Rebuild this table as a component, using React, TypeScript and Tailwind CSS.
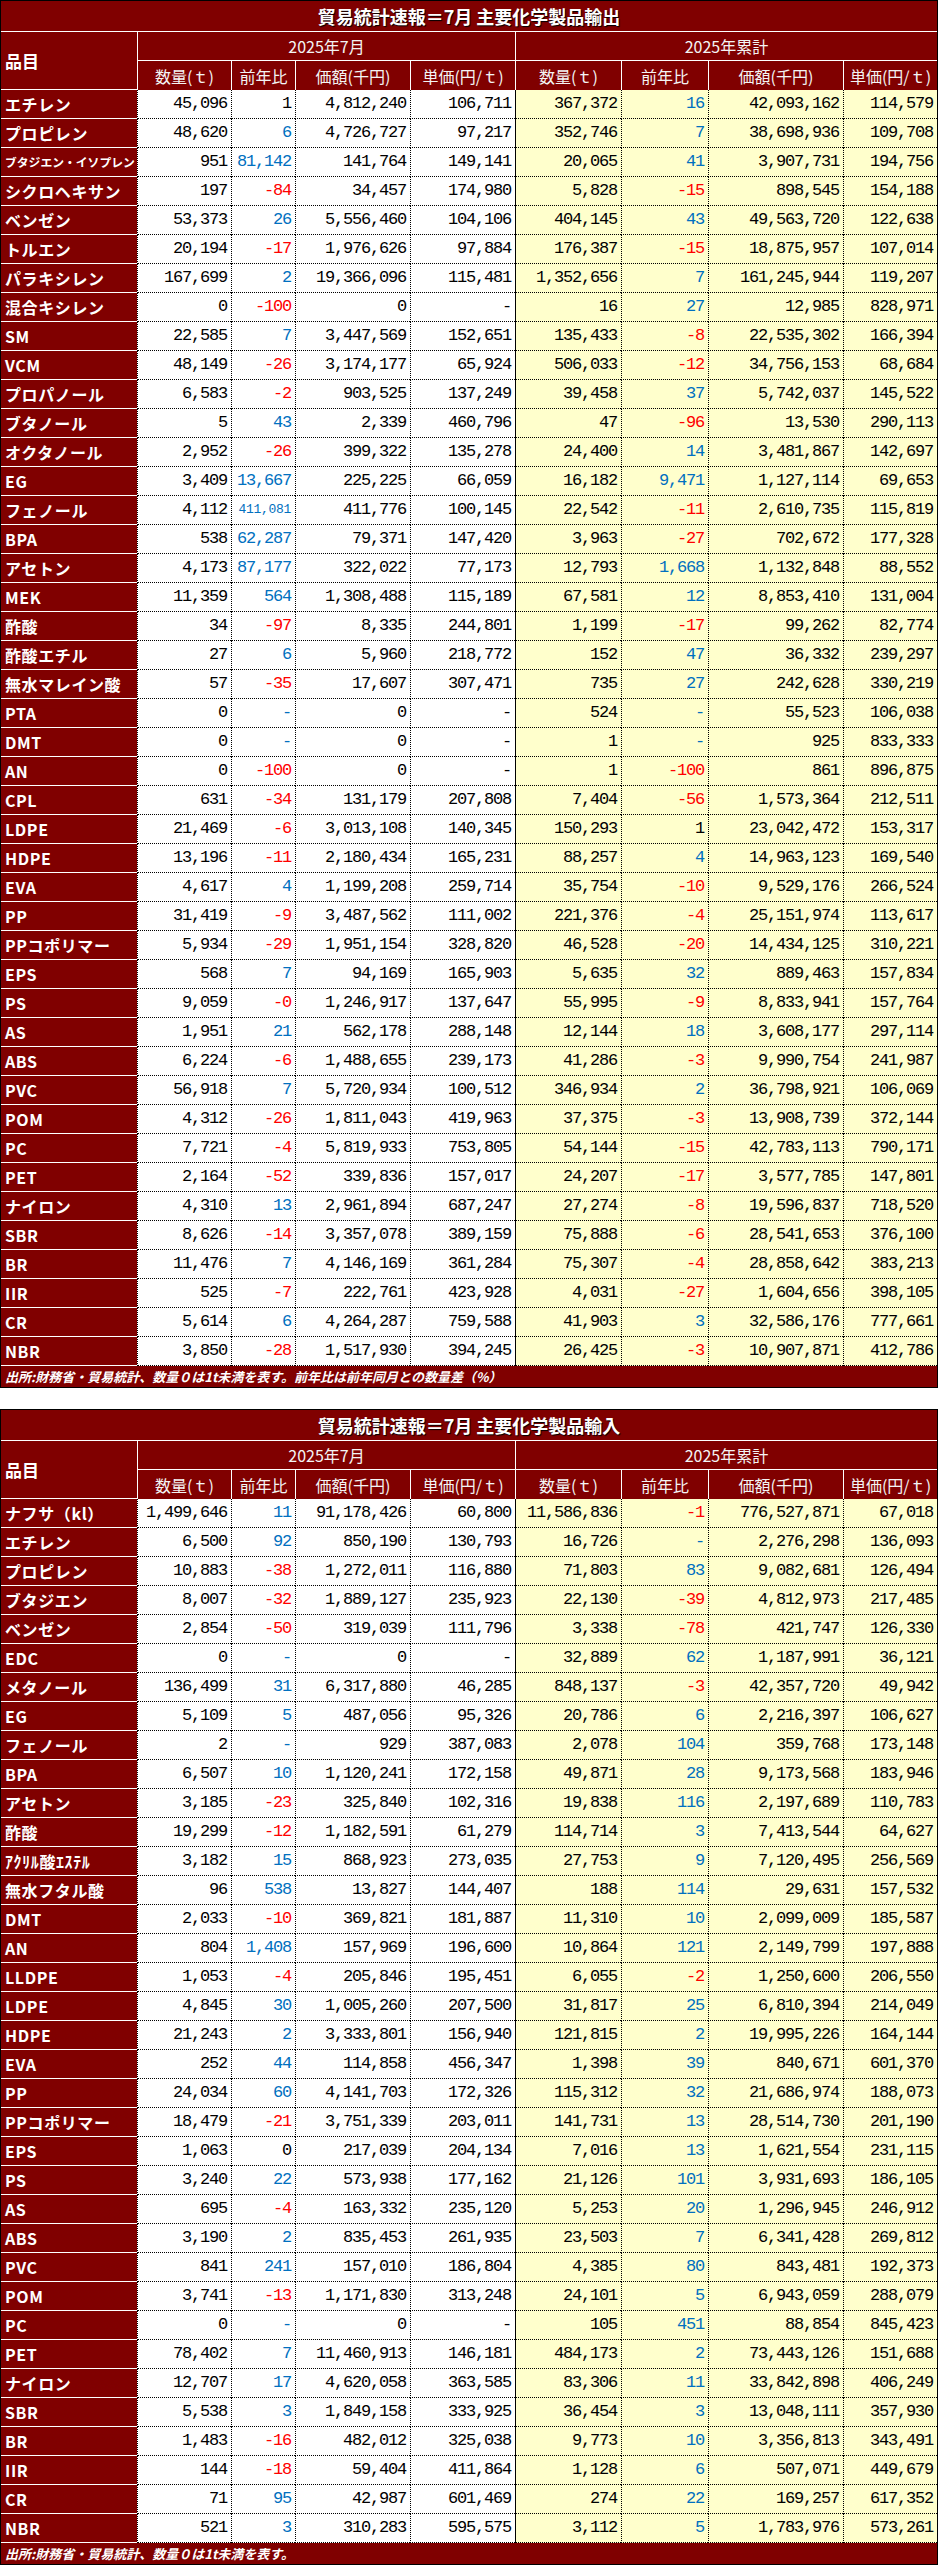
const exportRows = [
  "エチレン|45,096|1|4,812,240|106,711|367,372|16|42,093,162|114,579",
  "プロピレン|48,620|6|4,726,727|97,217|352,746|7|38,698,936|109,708",
  "ブタジエン・イソプレン|951|81,142|141,764|149,141|20,065|41|3,907,731|194,756",
  "シクロヘキサン|197|-84|34,457|174,980|5,828|-15|898,545|154,188",
  "ベンゼン|53,373|26|5,556,460|104,106|404,145|43|49,563,720|122,638",
  "トルエン|20,194|-17|1,976,626|97,884|176,387|-15|18,875,957|107,014",
  "パラキシレン|167,699|2|19,366,096|115,481|1,352,656|7|161,245,944|119,207",
  "混合キシレン|0|-100|0|-|16|27|12,985|828,971",
  "SM|22,585|7|3,447,569|152,651|135,433|-8|22,535,302|166,394",
  "VCM|48,149|-26|3,174,177|65,924|506,033|-12|34,756,153|68,684",
  "プロパノール|6,583|-2|903,525|137,249|39,458|37|5,742,037|145,522",
  "ブタノール|5|43|2,339|460,796|47|-96|13,530|290,113",
  "オクタノール|2,952|-26|399,322|135,278|24,400|14|3,481,867|142,697",
  "EG|3,409|13,667|225,225|66,059|16,182|9,471|1,127,114|69,653",
  "フェノール|4,112|411,081|411,776|100,145|22,542|-11|2,610,735|115,819",
  "BPA|538|62,287|79,371|147,420|3,963|-27|702,672|177,328",
  "アセトン|4,173|87,177|322,022|77,173|12,793|1,668|1,132,848|88,552",
  "MEK|11,359|564|1,308,488|115,189|67,581|12|8,853,410|131,004",
  "酢酸|34|-97|8,335|244,801|1,199|-17|99,262|82,774",
  "酢酸エチル|27|6|5,960|218,772|152|47|36,332|239,297",
  "無水マレイン酸|57|-35|17,607|307,471|735|27|242,628|330,219",
  "PTA|0|-|0|-|524|-|55,523|106,038",
  "DMT|0|-|0|-|1|-|925|833,333",
  "AN|0|-100|0|-|1|-100|861|896,875",
  "CPL|631|-34|131,179|207,808|7,404|-56|1,573,364|212,511",
  "LDPE|21,469|-6|3,013,108|140,345|150,293|1|23,042,472|153,317",
  "HDPE|13,196|-11|2,180,434|165,231|88,257|4|14,963,123|169,540",
  "EVA|4,617|4|1,199,208|259,714|35,754|-10|9,529,176|266,524",
  "PP|31,419|-9|3,487,562|111,002|221,376|-4|25,151,974|113,617",
  "PPコポリマー|5,934|-29|1,951,154|328,820|46,528|-20|14,434,125|310,221",
  "EPS|568|7|94,169|165,903|5,635|32|889,463|157,834",
  "PS|9,059|-0|1,246,917|137,647|55,995|-9|8,833,941|157,764",
  "AS|1,951|21|562,178|288,148|12,144|18|3,608,177|297,114",
  "ABS|6,224|-6|1,488,655|239,173|41,286|-3|9,990,754|241,987",
  "PVC|56,918|7|5,720,934|100,512|346,934|2|36,798,921|106,069",
  "POM|4,312|-26|1,811,043|419,963|37,375|-3|13,908,739|372,144",
  "PC|7,721|-4|5,819,933|753,805|54,144|-15|42,783,113|790,171",
  "PET|2,164|-52|339,836|157,017|24,207|-17|3,577,785|147,801",
  "ナイロン|4,310|13|2,961,894|687,247|27,274|-8|19,596,837|718,520",
  "SBR|8,626|-14|3,357,078|389,159|75,888|-6|28,541,653|376,100",
  "BR|11,476|7|4,146,169|361,284|75,307|-4|28,858,642|383,213",
  "IIR|525|-7|222,761|423,928|4,031|-27|1,604,656|398,105",
  "CR|5,614|6|4,264,287|759,588|41,903|3|32,586,176|777,661",
  "NBR|3,850|-28|1,517,930|394,245|26,425|-3|10,907,871|412,786",
];

const importRows = [
  "ナフサ（kl）|1,499,646|11|91,178,426|60,800|11,586,836|-1|776,527,871|67,018",
  "エチレン|6,500|92|850,190|130,793|16,726|-|2,276,298|136,093",
  "プロピレン|10,883|-38|1,272,011|116,880|71,803|83|9,082,681|126,494",
  "ブタジエン|8,007|-32|1,889,127|235,923|22,130|-39|4,812,973|217,485",
  "ベンゼン|2,854|-50|319,039|111,796|3,338|-78|421,747|126,330",
  "EDC|0|-|0|-|32,889|62|1,187,991|36,121",
  "メタノール|136,499|31|6,317,880|46,285|848,137|-3|42,357,720|49,942",
  "EG|5,109|5|487,056|95,326|20,786|6|2,216,397|106,627",
  "フェノール|2|-|929|387,083|2,078|104|359,768|173,148",
  "BPA|6,507|10|1,120,241|172,158|49,871|28|9,173,568|183,946",
  "アセトン|3,185|-23|325,840|102,316|19,838|116|2,197,689|110,783",
  "酢酸|19,299|-12|1,182,591|61,279|114,714|3|7,413,544|64,627",
  "ｱｸﾘﾙ酸ｴｽﾃﾙ|3,182|15|868,923|273,035|27,753|9|7,120,495|256,569",
  "無水フタル酸|96|538|13,827|144,407|188|114|29,631|157,532",
  "DMT|2,033|-10|369,821|181,887|11,310|10|2,099,009|185,587",
  "AN|804|1,408|157,969|196,600|10,864|121|2,149,799|197,888",
  "LLDPE|1,053|-4|205,846|195,451|6,055|-2|1,250,600|206,550",
  "LDPE|4,845|30|1,005,260|207,500|31,817|25|6,810,394|214,049",
  "HDPE|21,243|2|3,333,801|156,940|121,815|2|19,995,226|164,144",
  "EVA|252|44|114,858|456,347|1,398|39|840,671|601,370",
  "PP|24,034|60|4,141,703|172,326|115,312|32|21,686,974|188,073",
  "PPコポリマー|18,479|-21|3,751,339|203,011|141,731|13|28,514,730|201,190",
  "EPS|1,063|0|217,039|204,134|7,016|13|1,621,554|231,115",
  "PS|3,240|22|573,938|177,162|21,126|101|3,931,693|186,105",
  "AS|695|-4|163,332|235,120|5,253|20|1,296,945|246,912",
  "ABS|3,190|2|835,453|261,935|23,503|7|6,341,428|269,812",
  "PVC|841|241|157,010|186,804|4,385|80|843,481|192,373",
  "POM|3,741|-13|1,171,830|313,248|24,101|5|6,943,059|288,079",
  "PC|0|-|0|-|105|451|88,854|845,423",
  "PET|78,402|7|11,460,913|146,181|484,173|2|73,443,126|151,688",
  "ナイロン|12,707|17|4,620,058|363,585|83,306|11|33,842,898|406,249",
  "SBR|5,538|3|1,849,158|333,925|36,454|3|13,048,111|357,930",
  "BR|1,483|-16|482,012|325,038|9,773|10|3,356,813|343,491",
  "IIR|144|-18|59,404|411,864|1,128|6|507,071|449,679",
  "CR|71|95|42,987|601,469|274|22|169,257|617,352",
  "NBR|521|3|310,283|595,575|3,112|5|1,783,976|573,261",
];

const subHeads = ["数量(ｔ)", "前年比", "価額(千円)", "単価(円/ｔ)"];

// widths of the 8 number columns, used to shrink values that don't fit
const colW = [94, 64, 115, 105, 106, 87, 135, 94];

function yoyColor(v: string) {
  if (v.startsWith("-") && v !== "-") return "text-[#ff0000]";
  if (v === "0" || v === "1") return "text-black";
  return "text-[#0070c0]";
}

function Label({ name }: { name: string }) {
  const small = name.length > 9;
  return (
    <div className="bg-[#800000] border-b border-white flex items-center pl-[4px] overflow-hidden whitespace-nowrap">
      <span
        className={`text-white font-bold font-['Noto_Sans_CJK_JP',sans-serif] ${
          small ? "text-[11.8px]" : "text-[16px] tracking-[0.6px]"
        }`}
      >
        {name}
      </span>
    </div>
  );
}

function Num({ v, i }: { v: string; i: number }) {
  const isYoy = i === 1 || i === 5;
  const tooWide = v.length * 9 > colW[i] - 7;
  return (
    <div
      className={`flex items-center justify-end pr-[4px] border-b border-dotted border-black whitespace-nowrap font-['Liberation_Mono',monospace] ${
        i === 4 ? "shadow-[inset_1px_0_0_#000]" : "border-l"
      } ${i >= 4 ? "bg-[#ffffcc]" : "bg-white"} ${isYoy ? yoyColor(v) : "text-black"} ${
        tooWide ? "text-[13px] tracking-[-0.3px]" : "text-[17px] tracking-[-1.2px]"
      }`}
    >
      {v}
    </div>
  );
}

function StatTable({ title, rows, note }: { title: string; rows: string[]; note: string }) {
  return (
    <div className="w-[938px] border border-black bg-[#800000]">
      <div className="h-[31px] border-b border-white flex items-center justify-center">
        <span className="text-white font-bold text-[18px] font-['Noto_Sans_CJK_JP',sans-serif] [text-shadow:1px_1px_1px_#000]">
          {title}
        </span>
      </div>
      <div className="grid grid-cols-[136px_94px_64px_115px_105px_106px_87px_135px_94px] auto-rows-[29px] font-['Noto_Sans_CJK_JP',sans-serif]">
        <div className="row-span-2 border-b border-white flex items-center pl-[4px] text-white font-bold text-[17px]">
          品目
        </div>
        <div className="col-span-4 border-l border-b border-white flex items-center justify-center text-[#f4f4f4] text-[16px]">
          2025年7月
        </div>
        <div className="col-span-4 border-l border-b border-white flex items-center justify-center text-[#f4f4f4] text-[16px]">
          2025年累計
        </div>
        {[...subHeads, ...subHeads].map((h, i) => (
          <div key={i} className="border-l border-white flex items-center justify-center text-[#f4f4f4] text-[16px] whitespace-nowrap">
            {h}
          </div>
        ))}
        {rows.map((r) => {
          const [name, ...vals] = r.split("|");
          return [
            <Label key={name} name={name} />,
            ...vals.map((v, i) => <Num key={name + i} v={v} i={i} />),
          ];
        })}
      </div>
      <div className="h-[21px] flex items-center pl-[4px] text-white italic font-bold text-[13px] font-['Noto_Sans_CJK_JP',sans-serif] whitespace-nowrap">
        {note}
      </div>
    </div>
  );
}

export default function App() {
  return (
    <div className="bg-white w-[938px] flex flex-col gap-[21px]">
      <StatTable
        title="貿易統計速報＝7月 主要化学製品輸出"
        rows={exportRows}
        note="出所:財務省・貿易統計、数量０は1t未満を表す。前年比は前年同月との数量差（%）"
      />
      <StatTable
        title="貿易統計速報＝7月 主要化学製品輸入"
        rows={importRows}
        note="出所:財務省・貿易統計、数量０は1t未満を表す。"
      />
    </div>
  );
}
